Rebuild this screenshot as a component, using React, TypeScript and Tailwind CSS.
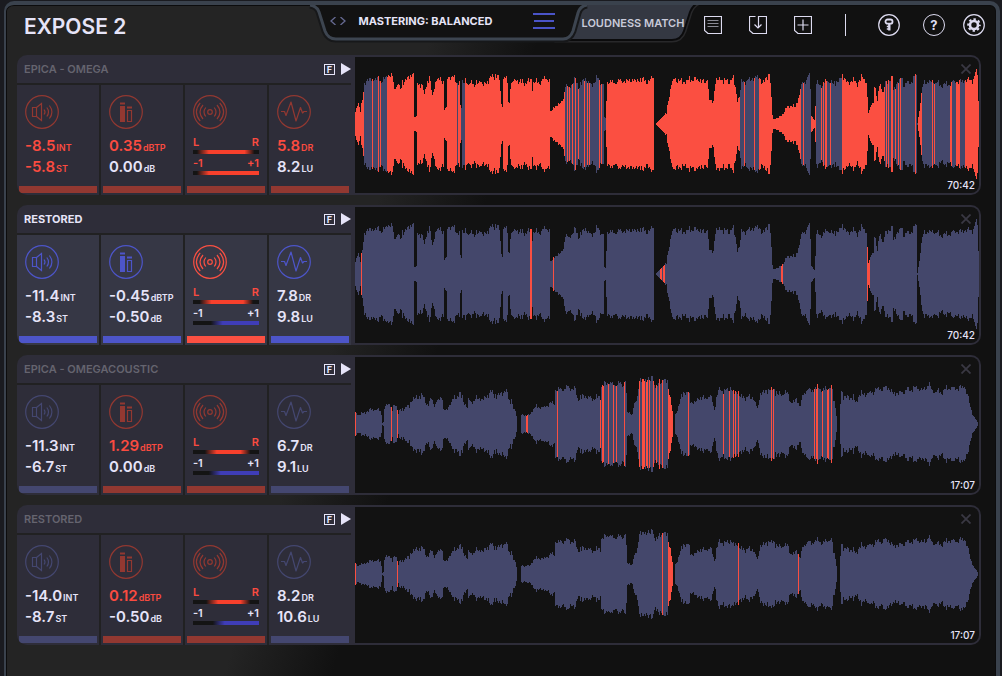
import type { ReactNode } from "react";
import clsx from "clsx";

type Tone = "ok" | "alert";
type Span = [number, number];
type Reading = { value: string; unit: string; hot?: boolean };
type Meter = { tone: Tone; from: number; to: number };

type Track = {
  name: string;
  selected?: boolean;
  duration: string;
  loudness: { tone: Tone; rows: Reading[] };
  peak: { tone: Tone; rows: Reading[] };
  stereo: { tone: Tone; balance: Meter; correlation: Meter };
  dynamics: { tone: Tone; rows: Reading[] };
  envelope: Span[];
  gain: number;
  /** Columns that are over the preset's limits. */
  clipped: Span[];
};

// Half-height of the wave at given columns, [column, height].
const omega: Span[] = [
  [0, 11], [3, 22], [5, 13], [7, 24], [9, 41], [12, 45], [15, 43], [20, 45], [28, 44], [33, 49], [37, 48], [39, 34],
  [43, 42], [45, 32], [47, 42], [52, 44], [57, 51], [58, 49], [59, 7], [61, 7], [62, 42], [67, 37], [69, 27], [70, 37],
  [74, 46], [77, 27], [80, 42], [85, 46], [88, 42], [89, 14], [91, 16], [92, 46], [98, 47], [102, 42], [104, 42],
  [105, 17], [106, 17], [107, 41], [110, 46], [113, 37], [116, 44], [119, 38], [125, 44], [128, 39], [135, 45],
  [141, 49], [144, 44], [146, 19], [147, 19], [148, 46], [151, 46], [152, 42], [153, 22], [154, 22], [155, 39],
  [160, 44], [168, 41], [176, 44], [177, 37], [178, 43], [185, 41], [190, 46], [194, 44], [195, 12], [197, 12],
  [198, 17], [205, 21], [208, 26], [210, 38], [215, 38], [220, 44], [223, 37], [230, 45], [235, 39], [242, 46],
  [247, 41], [248, 42], [249, 6], [250, 6], [251, 24], [252, 42], [258, 41], [272, 44], [288, 44], [293, 42],
  [297, 47], [298, 46], [299, 0], [300, 0], [306, 6], [311, 11], [313, 24], [316, 39], [319, 46], [328, 42],
  [335, 45], [345, 44], [350, 42], [352, 46], [354, 24], [356, 21], [358, 22], [360, 44], [367, 44], [373, 42],
  [378, 46], [382, 24], [384, 26], [386, 42], [393, 44], [400, 46], [404, 47], [407, 41], [412, 48], [414, 50],
  [415, 41], [417, 9], [418, 5], [423, 6], [428, 11], [433, 19], [440, 17], [443, 27], [447, 41], [450, 44],
  [454, 49], [455, 34], [456, 9], [459, 4], [460, 17], [461, 41], [467, 39], [472, 45], [475, 41], [482, 42],
  [487, 49], [492, 41], [497, 44], [502, 41], [507, 47], [511, 43], [512, 27], [513, 11], [515, 16], [518, 24],
  [519, 39], [522, 22], [524, 39], [525, 41], [528, 31], [530, 41], [537, 46], [538, 34], [542, 42], [547, 46],
  [548, 39], [555, 41], [560, 48], [561, 47], [562, 1], [564, 14], [567, 37], [569, 42], [578, 42], [588, 39],
  [598, 42], [605, 42], [610, 44], [618, 44], [621, 52], [622, 51], [623, 24],
];

const omegacoustic: Span[] = [
  [0, 11], [2, 9], [8, 11], [15, 14], [25, 14], [26, 10], [27, 1], [28, 2], [29, 15], [31, 19], [34, 20], [37, 13],
  [38, 18], [41, 19], [43, 11], [44, 13], [48, 15], [54, 18], [56, 24], [62, 26], [66, 29], [69, 24], [72, 19],
  [76, 24], [79, 19], [82, 23], [87, 28], [88, 14], [92, 14], [95, 21], [99, 26], [104, 31], [108, 24], [112, 16],
  [113, 24], [117, 22], [122, 26], [128, 25], [132, 29], [136, 31], [143, 27], [146, 31], [152, 33], [153, 25],
  [156, 24], [158, 15], [160, 13], [161, 8], [162, 0], [165, 0], [166, 9], [175, 9], [176, 12], [179, 17], [188, 16],
  [194, 20], [199, 21], [200, 34], [205, 36], [208, 34], [213, 39], [215, 35], [220, 34], [222, 25], [228, 27],
  [242, 26], [245, 28], [246, 39], [253, 41], [258, 39], [265, 40], [268, 39], [270, 45], [271, 30], [272, 12],
  [277, 10], [278, 17], [282, 27], [284, 45], [288, 42], [292, 46], [295, 43], [297, 49], [298, 43], [301, 36],
  [304, 42], [308, 44], [312, 42], [313, 36], [315, 26], [317, 12], [318, 0], [319, 0], [320, 10], [323, 18],
  [326, 27], [328, 32], [333, 32], [335, 23], [340, 20], [342, 26], [355, 27], [357, 22], [359, 14], [361, 25],
  [363, 34], [370, 33], [375, 36], [378, 31], [383, 32], [384, 27], [392, 27], [398, 26], [402, 15], [405, 31],
  [412, 34], [418, 35], [422, 30], [433, 31], [435, 22], [438, 21], [441, 26], [445, 17], [447, 28], [450, 34],
  [458, 34], [462, 37], [467, 34], [474, 37], [477, 35], [478, 24], [480, 19], [481, 8], [482, 0], [484, 0],
  [485, 20], [486, 34], [488, 28], [498, 26], [500, 22], [505, 30], [515, 31], [522, 35], [532, 37], [537, 30],
  [548, 32], [553, 34], [562, 36], [568, 34], [574, 40], [577, 32], [588, 33], [593, 37], [602, 35], [609, 38],
  [612, 29], [615, 17], [618, 8], [622, 2], [623, 0],
];

const tracks: Track[] = [
  {
    name: "EPICA - OMEGA",
    duration: "70:42",
    loudness: {
      tone: "alert",
      rows: [
        { value: "-8.5", unit: "INT", hot: true },
        { value: "-5.8", unit: "ST", hot: true },
      ],
    },
    peak: {
      tone: "alert",
      rows: [
        { value: "0.35", unit: "dBTP", hot: true },
        { value: "0.00", unit: "dB" },
      ],
    },
    stereo: {
      tone: "alert",
      balance: { tone: "alert", from: 24, to: 78 },
      correlation: { tone: "alert", from: 24, to: 100 },
    },
    dynamics: {
      tone: "alert",
      rows: [
        { value: "5.8", unit: "DR", hot: true },
        { value: "8.2", unit: "LU" },
      ],
    },
    envelope: omega,
    gain: 1,
    clipped: [
      [0, 9], [17, 18], [23, 24], [25, 26], [32, 102], [103, 106], [110, 210], [212, 213], [214, 215], [217, 218],
      [220, 221], [223, 224], [229, 230], [232, 233], [234, 235], [244, 245], [246, 247], [251, 385], [389, 390],
      [399, 400], [404, 446], [448, 449], [456, 461], [466, 467], [468, 469], [470, 472], [475, 476], [487, 530],
      [531, 532], [533, 534], [536, 538], [540, 541], [543, 544], [545, 546], [560, 561], [563, 567], [577, 578],
      [579, 580], [595, 597], [601, 605], [610, 624],
    ],
  },
  {
    name: "RESTORED",
    selected: true,
    duration: "70:42",
    loudness: {
      tone: "ok",
      rows: [
        { value: "-11.4", unit: "INT" },
        { value: "-8.3", unit: "ST" },
      ],
    },
    peak: {
      tone: "ok",
      rows: [
        { value: "-0.45", unit: "dBTP" },
        { value: "-0.50", unit: "dB" },
      ],
    },
    stereo: {
      tone: "alert",
      balance: { tone: "alert", from: 28, to: 76 },
      correlation: { tone: "ok", from: 45, to: 100 },
    },
    dynamics: {
      tone: "ok",
      rows: [
        { value: "7.8", unit: "DR" },
        { value: "9.8", unit: "LU" },
      ],
    },
    envelope: omega,
    gain: 1,
    clipped: [[6, 7], [175, 177], [198, 199], [305, 307], [308, 310], [426, 428], [512, 515]],
  },
  {
    name: "EPICA - OMEGACOUSTIC",
    duration: "17:07",
    loudness: {
      tone: "ok",
      rows: [
        { value: "-11.3", unit: "INT" },
        { value: "-6.7", unit: "ST" },
      ],
    },
    peak: {
      tone: "alert",
      rows: [
        { value: "1.29", unit: "dBTP", hot: true },
        { value: "0.00", unit: "dB" },
      ],
    },
    stereo: {
      tone: "alert",
      balance: { tone: "alert", from: 36, to: 72 },
      correlation: { tone: "ok", from: 42, to: 100 },
    },
    dynamics: {
      tone: "ok",
      rows: [
        { value: "6.7", unit: "DR" },
        { value: "9.1", unit: "LU" },
      ],
    },
    envelope: omegacoustic,
    gain: 1,
    clipped: [
      [0, 1], [36, 37], [42, 43], [171, 173], [202, 203], [245, 246], [247, 249], [253, 254], [258, 259], [261, 262],
      [269, 270], [284, 285], [287, 290], [291, 293], [294, 295], [298, 299], [301, 302], [304, 305], [307, 308],
      [313, 318], [333, 334], [368, 369], [374, 375], [378, 379], [380, 381], [383, 384], [416, 417], [418, 419],
      [459, 460], [461, 463], [467, 468], [472, 474], [476, 477],
    ],
  },
  {
    name: "RESTORED",
    duration: "17:07",
    loudness: {
      tone: "ok",
      rows: [
        { value: "-14.0", unit: "INT" },
        { value: "-8.7", unit: "ST" },
      ],
    },
    peak: {
      tone: "alert",
      rows: [
        { value: "0.12", unit: "dBTP", hot: true },
        { value: "-0.50", unit: "dB" },
      ],
    },
    stereo: {
      tone: "alert",
      balance: { tone: "alert", from: 38, to: 72 },
      correlation: { tone: "ok", from: 48, to: 100 },
    },
    dynamics: {
      tone: "ok",
      rows: [
        { value: "8.2", unit: "DR" },
        { value: "10.6", unit: "LU" },
      ],
    },
    envelope: omegacoustic,
    gain: 0.93,
    clipped: [[0, 1], [42, 43], [307, 308], [313, 318], [383, 384], [443, 444]],
  },
];

const COLUMNS = 624;

function heights(envelope: Span[], gain: number) {
  const out: number[] = [];
  let k = 0;
  for (let x = 0; x < COLUMNS; x++) {
    while (k < envelope.length - 2 && envelope[k + 1][0] <= x) k++;
    const [x0, h0] = envelope[k];
    const [x1, h1] = envelope[k + 1];
    const h = h0 + ((h1 - h0) * (x - x0)) / (x1 - x0);
    const grain = Math.sin(x * 2.3) + Math.sin(x * 0.83 + 2) + Math.sin(x * x * 0.37) * 0.8;
    out.push(Math.max(0, Math.round((h + grain * Math.min(1.5, h * 0.06)) * gain)));
  }
  return out;
}

function Waveform({ envelope, gain, clipped }: Pick<Track, "envelope" | "gain" | "clipped">) {
  let calm = "";
  let hot = "";
  heights(envelope, gain).forEach((h, x) => {
    if (!h) return;
    const bar = `M${x} ${67 - h}h1v${h * 2}h-1z`;
    if (clipped.some(([a, b]) => x >= a && x < b)) hot += bar;
    else calm += bar;
  });
  return (
    <svg
      className="block h-[136px] w-full"
      viewBox="0 0 624 136"
      preserveAspectRatio="none"
      shapeRendering="crispEdges"
      aria-hidden="true"
    >
      <path d={calm} fill="#44476b" />
      <path d={hot} fill="#fb4f41" />
    </svg>
  );
}

function Badge({ children }: { children: ReactNode }) {
  return (
    <svg
      className="block size-[34px]"
      viewBox="0 0 34 34"
      fill="none"
      stroke="currentColor"
      strokeWidth="1.200"
      aria-hidden="true"
    >
      <circle cx="17" cy="17" r="16.300" />
      {children}
    </svg>
  );
}

const LoudnessIcon = () => (
  <Badge>
    <path d="M7.500 12.500h4v9h-4zM11.500 12.500l5-4v17l-5-4" />
    <path d="M19 14.500q2 2.500 0 5M21.800 12.500q3.400 4.500 0 9M24.400 10.500q5 6.500 0 13" />
  </Badge>
);

const PeakIcon = () => (
  <Badge>
    <path d="M11 7.500h5v2h-5zM11 11h5v16h-5zM18 11.500h5v2h-5z" fill="currentColor" stroke="none" />
    <path d="M18.500 15.500h4v11h-4z" />
  </Badge>
);

const StereoIcon = () => (
  <Badge>
    <circle cx="17" cy="17" r="2.300" />
    <path d="M12.800 12.500q-3.600 4.500 0 9M21.200 12.500q3.600 4.500 0 9M10 10q-6 7 0 14M24 10q6 7 0 14" />
    <path d="M7.200 7.800q-7.600 9.200 0 18.400M26.800 7.800q7.600 9.200 0 18.400" />
  </Badge>
);

const DynamicsIcon = () => (
  <Badge>
    <path d="M4 16.500h3.500l1.500 4 5-13.500 5 19 4.500-13.500 2 5.500 1.500-1.500h3" strokeLinejoin="round" />
  </Badge>
);

function Cell({
  tone,
  selected,
  icon,
  children,
}: {
  tone: Tone;
  selected?: boolean;
  icon: ReactNode;
  children: ReactNode;
}) {
  const color = selected
    ? tone === "alert"
      ? "text-[#fb5042]"
      : "text-[#4d55c9]"
    : tone === "alert"
      ? "text-[#923831]"
      : "text-[#444770]";
  return (
    <div
      className={clsx("flex h-[110px] flex-col px-[2px] pb-[2px] pt-2.5", selected ? "bg-[#363745]" : "bg-[#2e2d39]")}
    >
      <div className={clsx("pl-1.5", color)}>{icon}</div>
      <div className="px-1.5 pt-1.5">{children}</div>
      <div className={clsx("mt-auto h-[7px] bg-current", color)} />
    </div>
  );
}

function Readings({ rows }: { rows: Reading[] }) {
  return (
    <>
      {rows.map((r) => (
        <p
          key={r.unit}
          className={clsx(
            "flex h-[21px] items-baseline gap-px whitespace-nowrap leading-[21px]",
            r.hot ? "text-[#fb4b40]" : "text-[#e6e4f8]",
          )}
        >
          <span className="text-[15px] font-semibold">{r.value}</span>
          <span className="text-[9px] font-semibold">{r.unit}</span>
        </p>
      ))}
    </>
  );
}

function MeterRow({ left, right, meter, hot }: { left: string; right: string; meter: Meter; hot: boolean }) {
  const color = meter.tone === "alert" ? "#f8402c" : "#3f3db8";
  const tail = meter.to < 100 ? `, #141414 ${meter.to + 15}%` : "";
  return (
    <div className="h-[21px]">
      <div
        className={clsx(
          "flex justify-between text-[11px] font-semibold leading-[15px]",
          hot ? "text-[#fb4b40]" : "text-[#e6e4f8]",
        )}
      >
        <span>{left}</span>
        <span>{right}</span>
      </div>
      <div
        className="h-1"
        style={{
          background: `linear-gradient(90deg, #141414 ${meter.from - 18}%, ${color} ${meter.from}%, ${color} ${meter.to}%${tail})`,
        }}
      />
    </div>
  );
}

function TrackRow({ track }: { track: Track }) {
  const { selected, loudness, peak, stereo, dynamics } = track;
  return (
    <article className="flex h-[140px]">
      <div className="w-[338px] shrink-0 overflow-hidden rounded-l-[10px] bg-[#2e2d39]">
        <div className="flex h-7 items-center pl-[7px] pr-1">
          <h2
            className={clsx(
              "flex-1 text-[11px]",
              selected ? "font-bold text-[#e6e4f8]" : "font-semibold text-[#65646f]",
            )}
          >
            {track.name}
          </h2>
          <button
            aria-label="Freeze"
            className="mr-1.5 flex size-[11px] items-center justify-center border border-[#e6e4f8] text-[9px] font-bold leading-none text-[#e6e4f8]"
          >
            F
          </button>
          <button aria-label={`Play ${track.name}`} className="text-[#e6e4f8]">
            <svg className="block h-3 w-2.5" viewBox="0 0 10 12" fill="currentColor">
              <path d="M0 0l10 6-10 6z" />
            </svg>
          </button>
        </div>
        <div className="mr-1 grid grid-cols-4 gap-x-[2px] border-t-2 border-[#212122] bg-[#212122]">
          <Cell tone={loudness.tone} selected={selected} icon={<LoudnessIcon />}>
            <Readings rows={loudness.rows} />
          </Cell>
          <Cell tone={peak.tone} selected={selected} icon={<PeakIcon />}>
            <Readings rows={peak.rows} />
          </Cell>
          <Cell tone={stereo.tone} selected={selected} icon={<StereoIcon />}>
            <MeterRow left="L" right="R" meter={stereo.balance} hot />
            <MeterRow left="-1" right="+1" meter={stereo.correlation} hot={stereo.correlation.tone === "alert"} />
          </Cell>
          <Cell tone={dynamics.tone} selected={selected} icon={<DynamicsIcon />}>
            <Readings rows={dynamics.rows} />
          </Cell>
        </div>
      </div>
      <div className="relative min-w-0 flex-1 rounded-r-[10px] border-y-2 border-r-2 border-[#2e2d39] bg-[#121212]">
        <Waveform envelope={track.envelope} gain={track.gain} clipped={track.clipped} />
        <button aria-label={`Remove ${track.name}`} className="absolute right-2 top-[7px] text-[#393843]">
          <svg className="block size-2.5" viewBox="0 0 10 10" stroke="currentColor" strokeWidth="1.800">
            <path d="M.5.5l9 9M9.500.5l-9 9" />
          </svg>
        </button>
        <span className="absolute bottom-0 right-1 text-[10px] font-medium leading-[15px] text-[#e6e4f8]">
          {track.duration}
        </span>
      </div>
    </article>
  );
}

function SquareTool({ label, children }: { label: string; children: ReactNode }) {
  return (
    <button aria-label={label}>
      <svg className="block size-[18px]" viewBox="0 0 18 18" fill="none" stroke="currentColor">
        {children}
      </svg>
    </button>
  );
}

function RoundTool({ label, children }: { label: string; children: ReactNode }) {
  return (
    <button aria-label={label}>
      <svg className="block size-[22px]" viewBox="0 0 22 22" fill="none" stroke="currentColor" strokeWidth="1.200">
        <circle cx="11" cy="11" r="10.300" />
        {children}
      </svg>
    </button>
  );
}

function Header() {
  return (
    <header className="flex h-[50px] items-start">
      <div className="flex h-11 flex-1 items-center pl-[18px]">
        <h1 className="whitespace-nowrap text-[21px] font-semibold text-[#e6e4f8]">EXPOSE 2</h1>
      </div>

      <div className="relative flex h-[45px] w-[398px] shrink-0 items-start">
        <svg className="absolute inset-0 size-full" viewBox="0 0 398 45" fill="none" aria-hidden="true">
          <path
            d="M268 -4H396Q387 -1 384 7L378 26Q375 35 366 35H252z"
            fill="#343842"
            stroke="#28282a"
            strokeWidth="5"
          />
          <path
            d="M268 -4H396Q387 -1 384 7L378 26Q375 35 366 35H252z"
            fill="#343842"
            stroke="#0b0b0c"
            strokeWidth="2"
          />
          <path
            d="M4 0Q11 1 13 7L19 26Q22 34 30 34H257Q264 34 267 26L272 8Q274 1 281 0"
            fill="#121212"
            stroke="#17181a"
            strokeWidth="7"
          />
          <path
            d="M4 0Q11 1 13 7L19 26Q22 34 30 34H257Q264 34 267 26L272 8Q274 1 281 0"
            fill="#121212"
            stroke="#3d4550"
            strokeWidth="3"
          />
        </svg>
        <div className="relative flex h-8 w-[264px] items-center pl-6 pr-[15px]">
          <button aria-label="Previous preset" className="text-[#666a92]">
            <svg className="block h-2 w-[7px]" viewBox="0 0 7 8" fill="none" stroke="currentColor" strokeWidth="1.300">
              <path d="M5.500 0L1 4l4.500 4" />
            </svg>
          </button>
          <button aria-label="Next preset" className="ml-0.5 text-[#666a92]">
            <svg className="block h-2 w-[7px]" viewBox="0 0 7 8" fill="none" stroke="currentColor" strokeWidth="1.300">
              <path d="M1.500 0L6 4 1.500 8" />
            </svg>
          </button>
          <span className="ml-[13px] flex-1 whitespace-nowrap text-[11px] font-bold text-[#e6e4f8]">
            MASTERING: BALANCED
          </span>
          <button aria-label="Preset list" className="text-[#4a54c8]">
            <svg className="block h-4 w-[22px]" viewBox="0 0 22 16" fill="none" stroke="currentColor" strokeWidth="2">
              <path d="M0 1h22M1 8h20M0 15h22" />
            </svg>
          </button>
        </div>
        <button className="relative h-9 whitespace-nowrap pl-3 text-[11px] font-semibold text-[#c9cad9]">
          LOUDNESS MATCH
        </button>
      </div>

      <div className="flex h-10 flex-1 items-center justify-end pr-[11px] text-[#dddbf0]">
        <div className="flex gap-[27px]">
          <SquareTool label="Report">
            <path d="M.5.5h17v17H4L.5 14.500z" strokeWidth="1.200" />
            <path d="M3.500 4.500h11M3.500 7.500h11M3.500 10.500h11" stroke="#8a8a94" />
          </SquareTool>
          <SquareTool label="Import">
            <path d="M6.500.5h-6v14L4 17.500h13.500V.5h-8v11.500M5.500 8.500L9 12l3.500-3.500" strokeWidth="1.200" />
          </SquareTool>
          <SquareTool label="Add">
            <path d="M.5.5h17v17H4L.5 14.500zM9 3.500v11M3.500 9h11" strokeWidth="1.200" />
          </SquareTool>
        </div>
        <div className="ml-[33px] mr-8 h-[22px] w-px bg-[#dddbf0]" />
        <div className="flex items-center">
          <RoundTool label="License">
            <rect x="7.500" y="5.500" width="7" height="4.200" rx="2" strokeWidth="1.800" />
            <path d="M11.300 9.500v7" strokeWidth="2.400" />
            <path d="M8.800 12.500h2M8.800 15h2" strokeWidth="1.300" />
          </RoundTool>
          <button
            aria-label="Help"
            className="ml-[23px] mr-[18px] flex size-[22px] items-center justify-center rounded-full border border-[#dddbf0] text-[13px] font-bold leading-none"
          >
            ?
          </button>
          <RoundTool label="Settings">
            <circle cx="11" cy="11" r="4" strokeWidth="2.600" />
            <circle cx="11" cy="11" r="5.800" strokeWidth="2" strokeDasharray="2.400 2.155" strokeDashoffset="1.200" />
          </RoundTool>
        </div>
      </div>
    </header>
  );
}

export default function App() {
  return (
    <div className="flex min-h-screen flex-col bg-[#1a1b20] pl-1 pr-[2px] pt-px font-[Inter,sans-serif]">
      <div className="flex-1 rounded-t-[10px] border-l-2 border-r-4 border-t-4 border-[#3a424d] bg-[linear-gradient(108deg,#242424_36%,#111111_45%)] shadow-[inset_0_0_0_1px_#0c0c0d]">
        <Header />
        <main className="flex flex-col gap-2.5 pb-8 pl-[11px] pr-[15px]">
          {tracks.map((track, i) => (
            <TrackRow key={i} track={track} />
          ))}
        </main>
      </div>
    </div>
  );
}
